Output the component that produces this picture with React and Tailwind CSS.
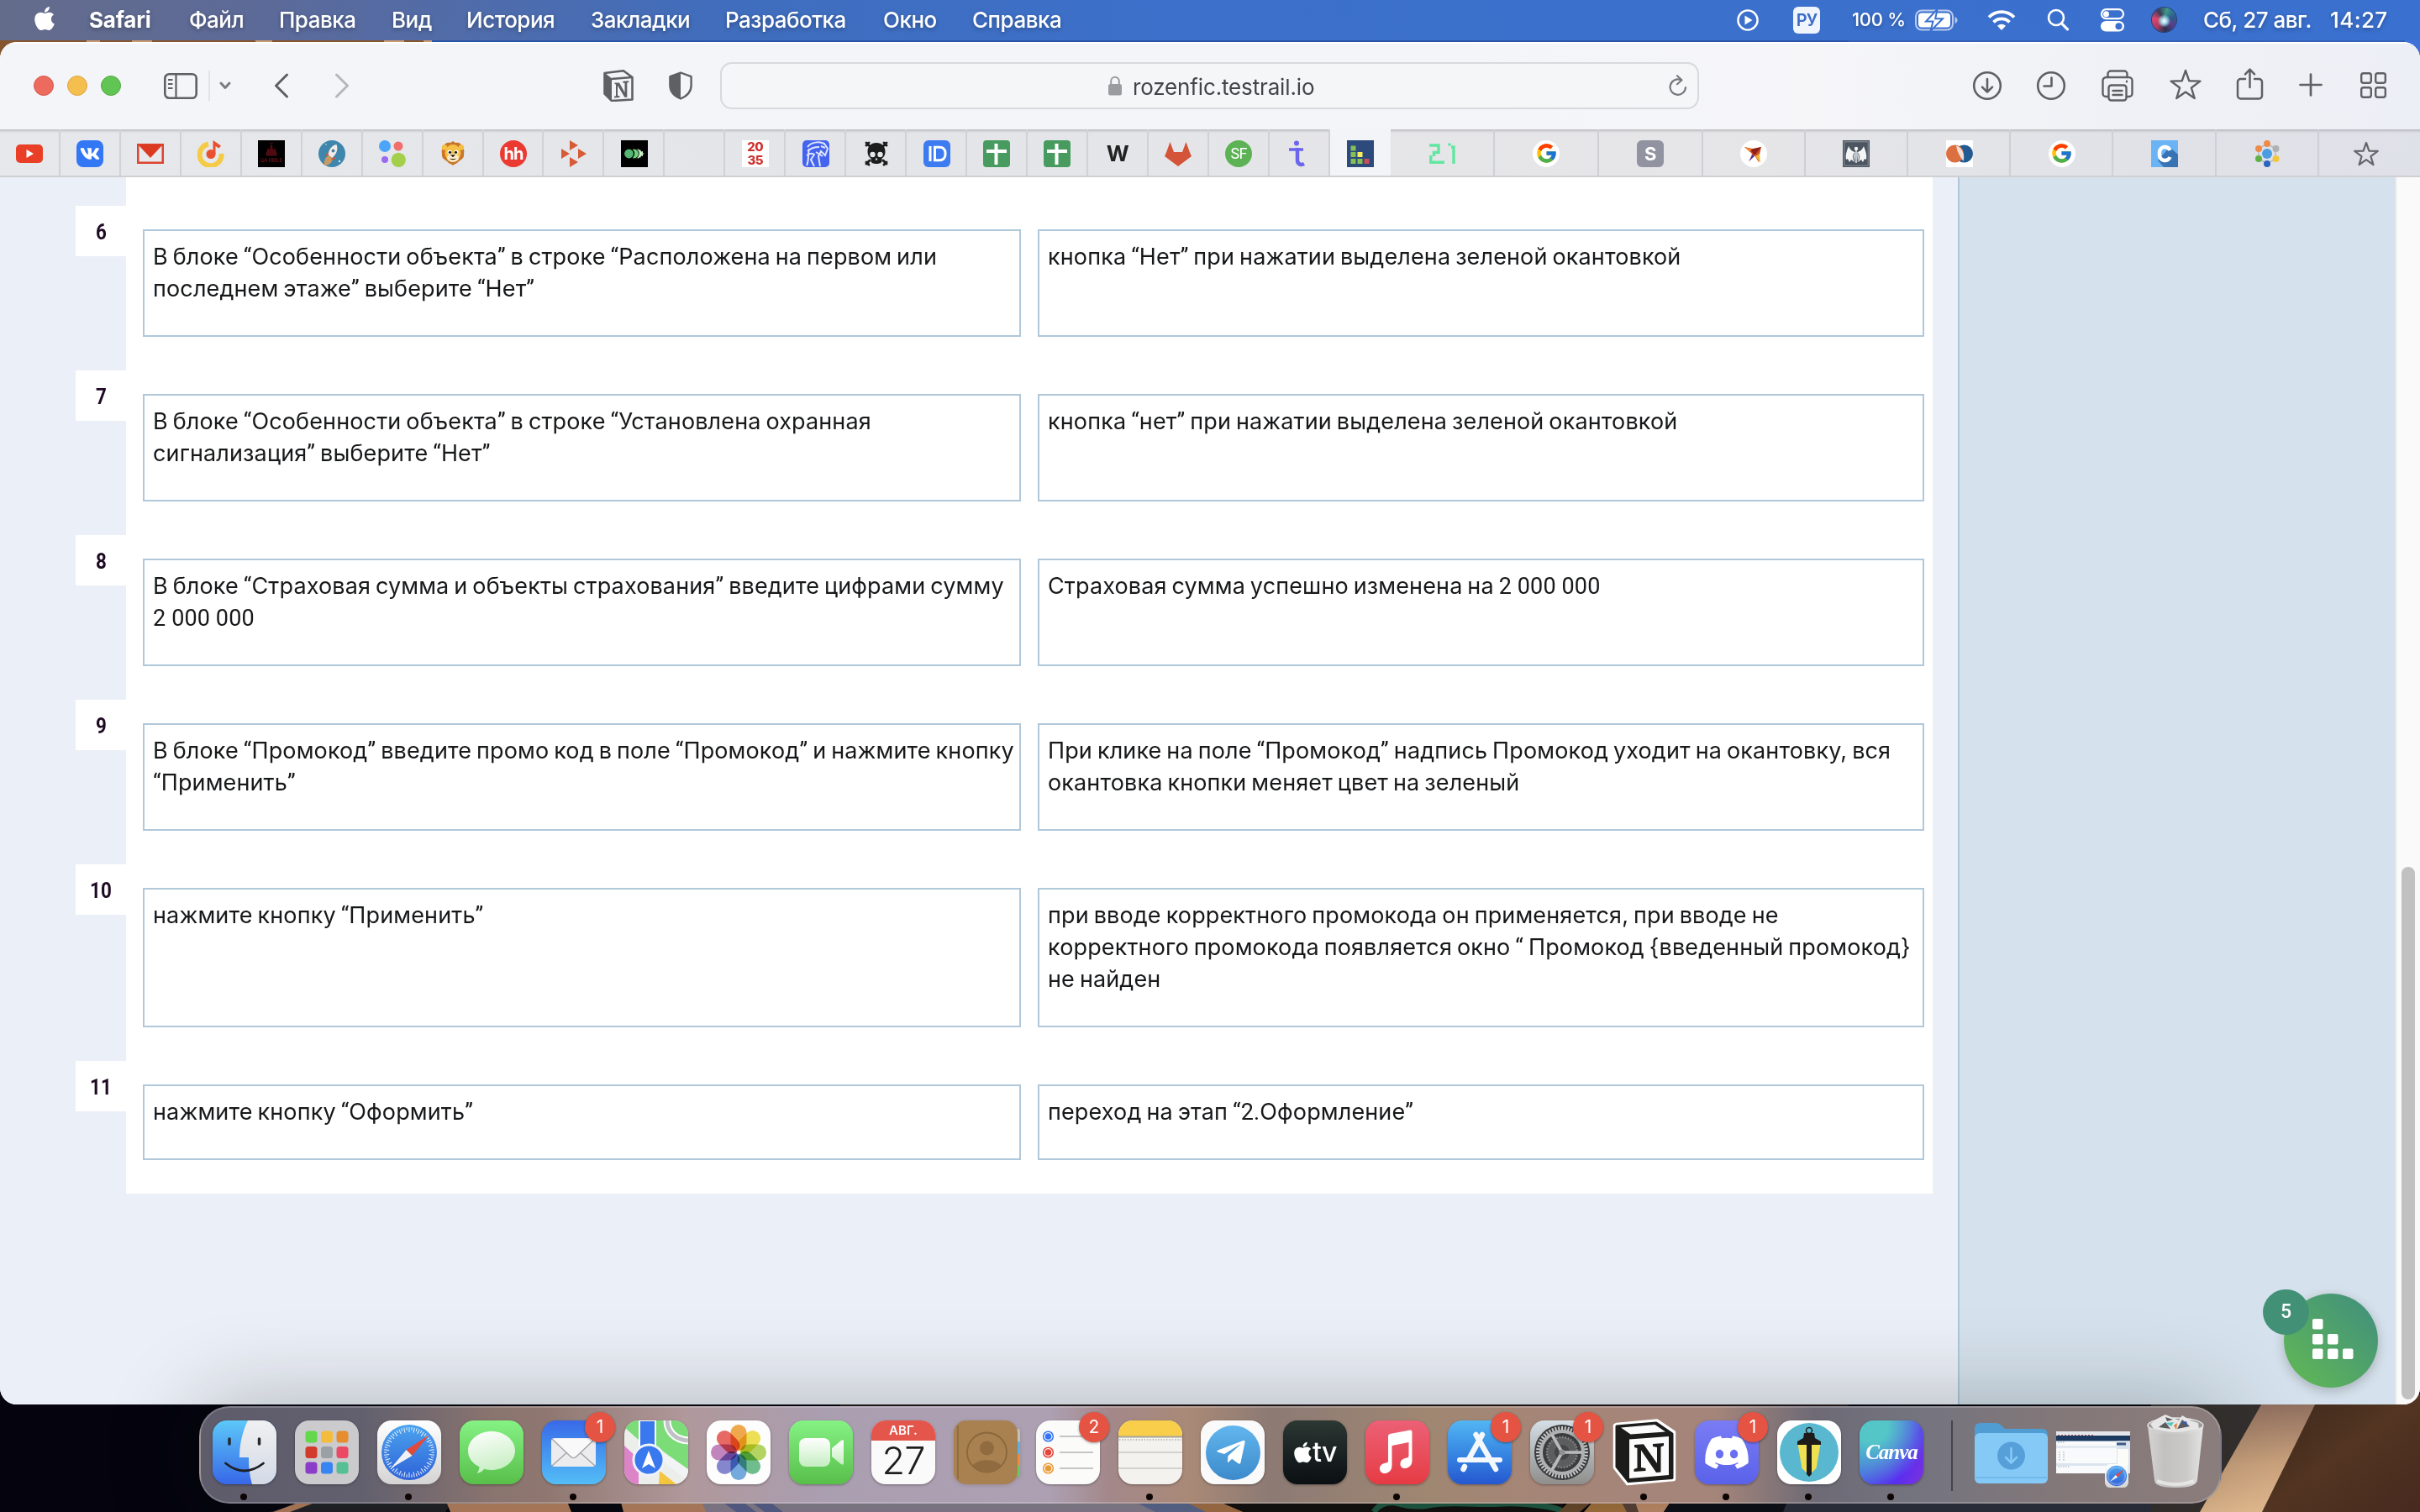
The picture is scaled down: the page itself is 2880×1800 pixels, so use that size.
import React from "react";
import { FaApple, FaVk, FaTelegramPlane, FaDiscord } from "react-icons/fa";
import { FcGoogle } from "react-icons/fc";

/* ---------- wallpaper ---------- */

function Wallpaper() {
  return (
    <svg className="absolute inset-0" width="2880" height="1800" viewBox="0 0 2880 1800">
      <defs>
        <linearGradient id="beam" x1="0" y1="0" x2="0" y2="1">
          <stop offset="0" stopColor="#86675a" />
          <stop offset="0.6" stopColor="#cda47f" />
          <stop offset="1" stopColor="#e4bb90" />
        </linearGradient>
        <linearGradient id="wood" x1="0" y1="0" x2="1" y2="1">
          <stop offset="0" stopColor="#3a271b" />
          <stop offset="0.5" stopColor="#533522" />
          <stop offset="1" stopColor="#47291f" />
        </linearGradient>
      </defs>
      <rect width="2880" height="1800" fill="#04030e" />
      <rect y="40" width="514" height="60" fill="#85552f" />
      <path d="M103 46h16v4h-16zM157 46h24v4h-24zM304 46h20v4h-20zM457 46h24v4h-24zM504 46h10v4h-10z" fill="#c79a72" />
      <rect x="514" y="40" width="1700" height="60" fill="#2b55a8" />
      <rect x="2200" y="40" width="680" height="60" fill="#3560b8" />
      <rect x="2862" y="40" width="18" height="60" fill="#3f72d8" />
      <path d="M320 1800L385 1785H540L530 1800z" fill="#222127" />
      <path d="M325 1800L365 1785H385L345 1800z" fill="#b97f60" />
      <path d="M530 1785H674L682 1800H536z" fill="#bd8463" />
      <path d="M674 1785H738L744 1800H680z" fill="#04040e" />
      <path d="M738 1785H834L842 1800H742z" fill="#bd8463" />
      <path d="M834 1785H1360L1380 1800H840z" fill="#8b8092" />
      <path d="M856 1785h24l20 15h-24zM890 1785h22l20 15h-22z" fill="#5a6190" />
      <path d="M1345 1785H1405L1440 1800H1375z" fill="#5d6992" />
      <path d="M1405 1785H1445L1480 1800H1435z" fill="#a9714a" />
      <path d="M1445 1785H1860V1800H1480z" fill="#120f10" />
      <path d="M1635 1800Q1645 1785 1665 1790T1700 1792T1745 1790T1790 1790T1830 1792T1860 1800" fill="none" stroke="#1f5a45" strokeWidth="7" />
      <path d="M1870 1785H1898L1880 1800H1855z" fill="#6b4a2e" />
      <path d="M1898 1785H1928L1940 1800H1885z" fill="#a8743e" />
      <path d="M1928 1785H1945L1952 1800H1936z" fill="#5b423a" />
      <path d="M1945 1785H1990L1980 1800H1950z" fill="#c68f6c" />
      <path d="M1990 1785H2128L2122 1800H1980z" fill="#0c0e18" />
      <path d="M2128 1785H2640V1800H2122z" fill="#2c2f3f" />
      <path d="M2560 1660H2800V1800H2560z" fill="#35302f" />
      <path d="M2755 1660H2880V1800H2692z" fill="url(#wood)" />
      <path d="M2698 1660H2761L2692 1800H2618z" fill="url(#beam)" />
      <rect x="1000" y="1668" width="1200" height="8" fill="#20151a" />
    </svg>
  );
}

/* ---------- menu bar ---------- */

function MenuBar() {
  return (
    <div className="relative flex h-[48px] shrink-0 items-center bg-[linear-gradient(90deg,#646c8b_0%,#5c6a99_11%,#4f6cab_20%,#406dbd_30%,#3c70ca_48%,#3a70cf_100%)] pb-[1px] text-[26px] font-medium tracking-[-0.5px] whitespace-nowrap text-white [text-shadow:0_2px_5px_rgba(0,0,0,0.3)]">
      <FaApple className="-mt-[4px] ml-[38px] h-[32px] w-[30px]" />
      <div className="ml-[38px] flex">
        <span className="w-[119px] font-bold tracking-[-0.2px]">Safari</span>
        <span className="w-[107px]">Файл</span>
        <span className="w-[134px]">Правка</span>
        <span className="w-[89px]">Вид</span>
        <span className="w-[148px]">История</span>
        <span className="w-[160px]">Закладки</span>
        <span className="w-[188px]">Разработка</span>
        <span className="w-[106px]">Окно</span>
        <span className="w-[108px]">Справка</span>
      </div>
      <svg className="ml-[802px]" width="26" height="26" viewBox="0 0 26 26">
        <circle cx="13" cy="13" r="11.6" fill="none" stroke="#fff" strokeWidth="2.4" />
        <path d="M9.5 7.5v11l9-5.5z" fill="#fff" />
      </svg>
      <div className="ml-[41px] flex h-[32px] w-[32px] items-center justify-center rounded-[6px] bg-[#f0f4fc] text-[20px] font-semibold tracking-[-1px] text-[#3a6cc8] [text-shadow:none]">РУ</div>
      <span className="ml-[38px] w-[75px] text-[22px] tracking-[-0.3px]">100 %</span>
      <svg width="51" height="26" viewBox="0 0 51 26">
        <rect x="1" y="1.5" width="44" height="23" rx="7" fill="none" stroke="#b9caee" strokeWidth="2" />
        <rect x="4" y="4.5" width="38" height="17" rx="4" fill="#fff" />
        <path d="M47.5 9v8c4-1.500 4-6.500 0-8z" fill="#b9caee" />
        <path d="M26.500 0L13 14.500h8.500L18.500 26L33 11.300h-8.800z" fill="#fff" stroke="#3a70cf" strokeWidth="2" />
      </svg>
      <svg className="ml-[35px]" width="34" height="26" viewBox="0 0 34 26" fill="none" stroke="#fff" strokeWidth="3.800">
        <path d="M2 9.500a21 21 0 0 1 30 0" />
        <path d="M7.500 15.300a13.500 13.500 0 0 1 19 0" />
        <path d="M17 25l-5-5.200a7 7 0 0 1 10 0z" fill="#fff" stroke="none" />
      </svg>
      <svg className="ml-[37px]" width="27" height="27" viewBox="0 0 27 27" fill="none" stroke="#fff" strokeWidth="2.600" strokeLinecap="round">
        <circle cx="11" cy="11" r="9" />
        <path d="M17.500 17.800l7 7" strokeWidth="3.200" />
      </svg>
      <svg className="ml-[36px]" width="30" height="28" viewBox="0 0 30 28">
        <rect x="2" y="1.200" width="26" height="11" rx="5.500" fill="none" stroke="#fff" strokeWidth="2.200" />
        <circle cx="7.500" cy="6.700" r="3.500" fill="#fff" />
        <rect x="1" y="15" width="28" height="12.500" rx="6.200" fill="#fff" />
        <circle cx="22.500" cy="21.200" r="4" fill="#3a70cf" />
      </svg>
      <div className="ml-[32px] h-[29px] w-[29px] rounded-full bg-[radial-gradient(circle_at_50%_55%,#ffffff_0%,#9fd6e8_16%,transparent_36%),conic-gradient(from_20deg,#3a8f8a,#2c5e8c,#5a3f8a,#27324f,#b23a63,#d8476c,#3a3a5a,#3fa08a)] ring-1 ring-[#27406f]" />
      <span className="ml-[32px] w-[151px]">Сб, 27 авг.</span>
      <span className="tracking-[0.4px]">14:27</span>
    </div>
  );
}

/* ---------- browser toolbar ---------- */

function NotionGlyph({ className }) {
  return (
    <svg className={className} viewBox="0 0 36 38">
      <path d="M1.500 4L24 1.200 34.500 9v26.500L10 37 1.500 28.500z" fill="#f3f4f7" stroke="#5f6064" strokeWidth="2.600" strokeLinejoin="round" />
      <path d="M1.500 4L9.500 10.500V36.500L1.500 28.500z" fill="#5f6064" stroke="#5f6064" strokeLinejoin="round" />
      <path d="M9.500 11L34 9" stroke="#5f6064" strokeWidth="2.400" />
      <path d="M13.500 15.500h5.500l6.500 11.500v-11l-2.200-.6v-1.600l7-.5v1.700l-2 .6v17.200h-3l-8.300-14v12l2.500.7v1.500l-6.500.4v-1.600l2-.6V17.400l-1.500-.4z" fill="#5f6064" />
    </svg>
  );
}

function Toolbar() {
  return (
    <div className="flex h-[104px] shrink-0 items-center bg-[linear-gradient(90deg,#f4f5f8_0%,#f4f5f9_60%,#f6f6f9_75%,#eff1f6_88%,#eceff5_100%)] text-[#5f6064] shadow-[inset_0_2px_0_rgba(255,255,255,0.9)]">
      <div className="ml-[40px] flex gap-[16px]">
        <div className="h-[24px] w-[24px] rounded-full border border-[#d9564b] bg-[#ec6a5e]" />
        <div className="h-[24px] w-[24px] rounded-full border border-[#dea63c] bg-[#f4bf4f]" />
        <div className="h-[24px] w-[24px] rounded-full border border-[#52a83e] bg-[#61c554]" />
      </div>
      <svg className="ml-[51px]" width="40" height="31" viewBox="0 0 40 31" fill="none" stroke="currentColor" strokeWidth="2.600">
        <rect x="1.300" y="1.300" width="37.400" height="28.400" rx="5" />
        <path d="M14.500 1.500v28M5 8h5.500M5 13h5.500M5 18h5.500" strokeWidth="2.200" />
      </svg>
      <div className="ml-[13px] h-[36px] w-[2px] bg-[#e2e3e7]" />
      <svg className="ml-[11px]" width="14" height="10" viewBox="0 0 14 10" fill="none" stroke="#7a7b80" strokeWidth="3" strokeLinecap="round" strokeLinejoin="round">
        <path d="M2 2l5 5.500L12 2" />
      </svg>
      <svg className="ml-[51px]" width="18" height="30" viewBox="0 0 18 30" fill="none" stroke="currentColor" strokeWidth="3" strokeLinecap="round" strokeLinejoin="round">
        <path d="M15.500 2L2.500 15l13 13" />
      </svg>
      <svg className="ml-[54px]" width="18" height="30" viewBox="0 0 18 30" fill="none" stroke="#b6b7bb" strokeWidth="3" strokeLinecap="round" strokeLinejoin="round">
        <path d="M2.500 2l13 13-13 13" />
      </svg>
      <NotionGlyph className="ml-[302px] h-[38px] w-[36px]" />
      <svg className="ml-[42px]" width="28" height="34" viewBox="0 0 28 34">
        <path d="M14 1.500L26.600 6.200v10.500c0 7.500-5 12.500-12.600 15.800C6.400 29.200 1.400 24.200 1.400 16.700V6.200z" fill="none" stroke="currentColor" strokeWidth="2.400" strokeLinejoin="round" />
        <path d="M14 1.500v31C6.400 29.200 1.400 24.200 1.400 16.700V6.200z" fill="currentColor" />
      </svg>
      <div className="ml-[33px] flex h-[56px] w-[1165px] items-center rounded-[14px] border-2 border-[#d8d9dc] bg-[#f5f6f8]">
        <svg className="ml-[460px]" width="16" height="24" viewBox="0 0 16 24">
          <rect x="0" y="10" width="16" height="13.500" rx="2.500" fill="#9b9c9f" />
          <path d="M3.200 11V6.500a4.800 4.800 0 0 1 9.600 0V11" fill="none" stroke="#9b9c9f" strokeWidth="2" />
        </svg>
        <span className="mt-[2px] ml-[13px] text-[26px] tracking-[-0.15px] text-[#434447]">rozenfic.testrail.io</span>
        <svg className="mr-[12px] ml-auto" width="22" height="26" viewBox="0 0 22 26" fill="none" stroke="#77787c" strokeWidth="2.200" strokeLinecap="round" strokeLinejoin="round">
          <path d="M14.500 6.200A9.200 9.200 0 1 0 20 15" />
          <path d="M10 1.200l5.500 5-5.500 5" />
        </svg>
      </div>
      <div className="flex items-center [&>svg]:fill-none [&>svg]:stroke-current [&>svg]:[stroke-linecap:round] [&>svg]:[stroke-linejoin:round]">
        <svg className="ml-[325px]" width="36" height="36" viewBox="0 0 36 36" strokeWidth="2.600">
          <circle cx="18" cy="18" r="15.800" />
          <path d="M18 10v15.500M12 19.700l6 6 6-6" />
        </svg>
        <svg className="ml-[40px]" width="36" height="36" viewBox="0 0 36 36" strokeWidth="2.600">
          <circle cx="18" cy="18" r="15.800" />
          <path d="M18.500 8.500v10h-9" />
        </svg>
        <svg className="ml-[42px]" width="38" height="38" viewBox="0 0 38 38" strokeWidth="2.400">
          <path d="M8 32H5a3.500 3.500 0 0 1-3.500-3.500V13A4 4 0 0 1 5.500 9h27a4 4 0 0 1 4 4v15.500A3.500 3.500 0 0 1 33 32h-3" />
          <path d="M7.500 9V5A3.500 3.500 0 0 1 11 1.500h16A3.500 3.500 0 0 1 30.500 5v4" />
          <rect x="8.500" y="18.500" width="21" height="18" rx="3" />
          <path d="M13.500 25h11M13.500 30h11M30 13.800v.4" />
        </svg>
        <svg className="-mt-[3px] ml-[43px]" width="38" height="37" viewBox="0 0 38 37" strokeWidth="2.400">
          <path d="M19 2l4.300 12.300 13.100.3-10.500 7.900 3.800 12.600L19 27.600 8.300 35.100l3.800-12.600L1.600 14.600l13.100-.3z" />
        </svg>
        <svg className="-mt-[4px] ml-[41px]" width="33" height="38" viewBox="0 0 33 38" strokeWidth="2.500">
          <path d="M11 13H5.500A3.500 3.500 0 0 0 2 16.500V33a3.500 3.500 0 0 0 3.500 3.500h22A3.500 3.500 0 0 0 31 33V16.500A3.500 3.500 0 0 0 27.500 13H22M16.500 23V2M11 7.300L16.500 1.700 22 7.300" />
        </svg>
        <svg className="-mt-[2px] ml-[42px]" width="28" height="28" viewBox="0 0 28 28" strokeWidth="2.700">
          <path d="M14 1.500v25M1.500 14h25" />
        </svg>
        <svg className="-mt-[2px] ml-[45px]" width="31" height="31" viewBox="0 0 31 31" strokeWidth="2.400">
          <rect x="1.200" y="1.200" width="11.600" height="11.600" rx="2.500" />
          <rect x="18.200" y="1.200" width="11.600" height="11.600" rx="2.500" />
          <rect x="1.200" y="18.200" width="11.600" height="11.600" rx="2.500" />
          <rect x="18.200" y="18.200" width="11.600" height="11.600" rx="2.500" />
        </svg>
      </div>
    </div>
  );
}

/* ---------- pinned tabs ---------- */

const tile = "flex h-[32px] w-[32px] items-center justify-center overflow-hidden leading-none";
const Svg = ({ children }) => (
  <svg width="32" height="32" viewBox="0 0 32 32">{children}</svg>
);
const Sheets = () => (
  <Svg>
    <rect width="32" height="32" rx="4" fill="#479b5f" />
    <path d="M13.500 4h4v7H28v4H17.500v14h-4V15H4v-4h9.500z" fill="#fff" />
  </Svg>
);
const Google = () => (
  <div className={`${tile} rounded-full bg-white`}>
    <FcGoogle className="h-[27px] w-[27px]" />
  </div>
);

const pinned = [
  <Svg><rect y="5" width="32" height="22" rx="5" fill="#ea3f27" /><path d="M12.500 11v10l8.500-5z" fill="#fff" /></Svg>,
  <div className={`${tile} rounded-[8px] bg-[#3477f5] text-white`}><FaVk className="h-[24px] w-[24px]" /></div>,
  <Svg><rect y="4" width="32" height="24" fill="#dc4330" /><path d="M2.500 6.500V25.500h27V6.500L16 21z" fill="#e8e9ec" /><path d="M2 5L16 20 30 5z" fill="#dc3a20" /></Svg>,
  <Svg><path d="M13 4.500A13 13 0 1 0 28.500 16" fill="none" stroke="#f5cb45" strokeWidth="6" /><circle cx="16" cy="16.500" r="5.500" fill="#e8502f" /><path d="M18.500 0l9.500 6.500-2.500 3-4-2.500V17h-3z" fill="#e8502f" /></Svg>,
  <Svg><rect width="32" height="32" fill="#000" /><path d="M10 16l2-6 2 3 2-8 2 8 2-3 2 6v2H10zM14 3.500h4" fill="#4d0b12" stroke="#6e1019" strokeWidth=".7" /><text x="2.500" y="26" fontSize="6.800" textLength="27" fontFamily="Inter" fill="#7c141c">QA BIBLE</text></Svg>,
  <Svg><circle cx="16" cy="16" r="16" fill="#3f86ad" /><path d="M7 30c-1-7 2-11 7-13l3 6c-2 4-4 7-10 7z" fill="#c99a62" /><path d="M21.500 5c2 5 .5 11-5 16l-5-4c1-6 4-11 10-12z" fill="#f1ece8" /><path d="M11.500 13l-3.500 6 3.500-1zM18 19.500L14.500 24l6.500-2z" fill="#d6533a" /><circle cx="17.500" cy="12.500" r="2" fill="#4b7fa8" /><circle cx="25" cy="25" r="1.200" fill="#dce9f0" /><circle cx="9" cy="5" r=".8" fill="#dce9f0" /></Svg>,
  <Svg><circle cx="7" cy="7" r="7" fill="#4ca5f9" /><circle cx="23" cy="7" r="5.500" fill="#ee6f6c" /><circle cx="7" cy="23" r="4" fill="#9a6bf0" /><circle cx="23.300" cy="23.300" r="8.600" fill="#a3cf4b" /></Svg>,
  <Svg><path d="M16 1l3 2c4-1 7 1 8 4 2 3 3 6 2 9 1 5-3 7-6 9-2 3-5 3-7 5-2-2-5-2-7-5-3-2-7-4-6-9-1-3 0-6 2-9 1-3 4-5 8-4z" fill="#c9762a" /><circle cx="6" cy="8.500" r="3.200" fill="#f6c044" /><circle cx="26" cy="8.500" r="3.200" fill="#f6c044" /><ellipse cx="16" cy="15" rx="9.500" ry="10" fill="#f6c044" /><ellipse cx="16" cy="21" rx="7" ry="5" fill="#fbecc8" /><circle cx="12" cy="14" r="2.500" fill="#fff" /><circle cx="20" cy="14" r="2.500" fill="#fff" /><circle cx="12.500" cy="14.300" r="1.600" fill="#1c1a18" /><circle cx="19.500" cy="14.300" r="1.600" fill="#1c1a18" /><path d="M13.500 17.500h5L16 20zM12.500 22q3.500 2 7 0" fill="#1c1a18" stroke="#4a2c10" strokeWidth=".6" /></Svg>,
  <div className={`${tile} rounded-full bg-[#eb3a31] text-[20px] font-bold tracking-[-1px] text-white`}>hh</div>,
  <Svg><path d="M11 0l10 6-10 6zM1 10l10 6-10 6zM21 10l10 6-10 6zM11 20l10 6-10 6z" fill="#d75b36" /></Svg>,
  <Svg><rect width="32" height="32" fill="#000" /><path d="M17 10.800h2.500a5.300 5.300 0 0 1 0 10.400H17z" fill="#c9f2c5" /><path d="M20 10l2 2 1-1 1 2.500 2-.5v2.200l2 .8-2 .8v2.200l-2-.5-1 2.500-1-1-2 2z" fill="#c9f2c5" /><circle cx="15.500" cy="16" r="6.200" fill="#000" /><circle cx="15.500" cy="16" r="5.400" fill="#6fd07f" /><circle cx="10" cy="16" r="6.200" fill="#000" /><circle cx="9.500" cy="16" r="5.400" fill="#55b673" /></Svg>,
  null,
  <div className={`${tile} flex-col bg-white text-[15px] font-extrabold tracking-[-0.5px] text-[#d0312d]`}><span>20</span><span className="mt-[1px]">35</span></div>,
  <Svg><rect width="32" height="32" rx="5" fill="#4564ee" /><path d="M6 8c4-6 14-7 20-4l4 6-3 8-5-5-3 6 2 12M6 13c5-5 10-5 14-5M5 18c3-2 7-3 9-1l-4 6 4 8M8 10c-2 8 0 14-3 20M16 14l8 5M22 7l5 2" fill="none" stroke="#dfe6ff" strokeWidth="2" /></Svg>,
  <Svg><path d="M4 3l4 4M28 3l-4 4M4 28l4-4M28 28l-4-4M7 3L4 6M25 3l3 3M7 29l-3-3M25 29l3-3" stroke="#1c1c1c" strokeWidth="3" strokeLinecap="round" /><path d="M16 3c6.500 0 10.500 4.500 10.500 10.500 0 4-1.500 6.500-4 8V25c0 2-3 3-6.500 3S9.500 27 9.500 25v-3.500c-2.500-1.500-4-4-4-8C5.500 7.500 9.500 3 16 3z" fill="#1c1c1c" /><circle cx="11.500" cy="17" r="3.200" fill="#e5e6e9" /><circle cx="20.500" cy="17" r="3.200" fill="#e5e6e9" /><path d="M16 20.500l1.500 3h-3z" fill="#e5e6e9" /></Svg>,
  <Svg><rect width="32" height="32" rx="6" fill="#3d7cf0" /><path d="M8 7v18M13.500 8.200h6a6.500 6.500 0 0 1 6.500 6.500v2.600a6.500 6.500 0 0 1-6.500 6.500h-6z" fill="none" stroke="#fff" strokeWidth="3" /></Svg>,
  <Sheets />,
  <Sheets />,
  <span className="text-[26px] leading-none font-bold text-[#222]">W</span>,
  <Svg><path d="M6.500 2l4.500 12h10L25.500 2l4.500 12.500 2 4.500L16 31 0 19l2-4.500z" fill="#d35438" /></Svg>,
  <div className={`${tile} rounded-full bg-[#5cb255] font-[Roboto] text-[18px] tracking-[-0.5px] text-white`}>SF</div>,
  <Svg><circle cx="13" cy="3.500" r="3" fill="#6a64ee" /><path d="M4 11h17" stroke="#6a64ee" strokeWidth="3.600" /><path d="M14 9v14.500c0 5 4 6.500 8 4.500" fill="none" stroke="#6a64ee" strokeWidth="4.500" /></Svg>,
  <Svg><rect width="32" height="32" fill="#2c4a7c" /><path d="M4.500 6.500h6v6h-6zM4.500 14h6v6h-6zM4.500 22h6v6h-6zM12.500 22h6v6h-6z" fill="#86bf55" /><path d="M12.500 14h6v6h-6z" fill="#f7ef5c" /><path d="M20.500 22h6v6h-6z" fill="#c94f5c" /></Svg>,
];

const wide = [
  <Svg><path d="M1 6h11v5M12 10.500v4H6.500v4.500M2.800 18v8.200H19M25 3.500v3M27 8h3v20" fill="none" stroke="#62e6a0" strokeWidth="3.400" /></Svg>,
  <Google />,
  <div className={`${tile} rounded-[6px] bg-[#9193a0] text-[22px] font-bold text-white`}>S</div>,
  <Svg><circle cx="16" cy="16" r="16" fill="#fff" /><path d="M5 8l10 2 10-2-2 9-1 9-5-8-6 7 3-9z" fill="#c9501f" /><path d="M12 11l13-3-8 10z" fill="#8e1f1a" /><path d="M10 25l5-8 2 2z" fill="#5130a8" /><path d="M18 19l5-3 1 11z" fill="#f0b432" /><path d="M5 8l9 2.500-3 3z" fill="#ef8a35" /></Svg>,
  <Svg><rect width="32" height="32" fill="#4c5560" /><rect x="1.800" y="1.800" width="28.400" height="28.400" fill="none" stroke="#8b939c" /><path d="M7 7c2 5 6 7 8 7l-1 12-4-3-2 3-2-4-2 1c-1-6 1-11 3-16zM25 7c-2 5-6 7-8 7l1 12 4-3 2 3 2-4 2 1c1-6-1-11-3-16z" fill="#f4f5f6" /><circle cx="16" cy="10" r="2.200" fill="#f4f5f6" /><ellipse cx="16" cy="20" rx="3.500" ry="5.500" fill="none" stroke="#6c747e" strokeWidth="1.200" /><path d="M16 12v15" stroke="#dfe2e5" strokeWidth="1.600" /></Svg>,
  <Svg><rect width="32" height="32" fill="#fff" /><circle cx="21.500" cy="16" r="10.500" fill="#215a93" /><circle cx="10.500" cy="16" r="10.500" fill="#dd7041" /><path d="M12 6.500q5 1 7.500 6.500 3 6 1 12-2-2.500-4.500-7Q13 13 12 6.500z" fill="#f5f1ee" opacity=".85" /></Svg>,
  <Google />,
  <Svg><rect width="32" height="32" fill="#6ab4f6" /><path d="M22 8l10 9v15H15l-7-8z" fill="#3873b4" /><path d="M22.500 12a6.500 6.500 0 0 0-12.500 2v4a6.500 6.500 0 0 0 12.500 2" fill="none" stroke="#fff" strokeWidth="4.500" /></Svg>,
  <Svg><path d="M16 4l10 6v12l-10 6-10-6V10z" fill="none" stroke="#b8babf" strokeWidth="1.500" /><circle cx="16" cy="16" r="6" fill="#4a9de0" /><circle cx="16" cy="4" r="4" fill="#ef8b49" /><circle cx="6" cy="10" r="4" fill="#ef8b49" /><circle cx="26.500" cy="10" r="4" fill="#b1b1b1" /><circle cx="6" cy="22" r="4" fill="#61b244" /><circle cx="26.500" cy="22" r="4" fill="#f5c63d" /><circle cx="16" cy="28" r="4" fill="#2c63bf" /></Svg>,
  <svg className="-ml-[8px]" width="30" height="30" viewBox="0 0 38 37" fill="none" stroke="#65666a" strokeWidth="2.800" strokeLinejoin="round"><path d="M19 2l4.300 12.300 13.100.3-10.500 7.900 3.800 12.600L19 27.600 8.300 35.100l3.800-12.600L1.600 14.600l13.100-.3z" /></svg>,
];

function TabBar() {
  return (
    <div className="flex h-[57px] shrink-0 border-b-2 border-[#cfd0d3] bg-[linear-gradient(90deg,#e6e8ec_0%,#e4e5e9_35%,#e6e6e8_70%,#e1e2e8_88%,#dfe1e8_100%)]">
      {pinned.map((icon, i) => {
        const active = i === pinned.length - 1;
        return (
          <div
            key={i}
            className={
              active
                ? "flex w-[72px] shrink-0 items-center justify-center bg-[#f3f4f7] pt-[2px]"
                : "flex w-[71.950px] shrink-0 items-center justify-center border-r-2 border-[#d1d2d6] pt-[2px] pl-[1px] shadow-[inset_0_4px_3px_-2px_rgba(0,0,0,0.18)]"
            }
          >
            {icon}
          </div>
        );
      })}
      {wide.map((icon, i) => (
        <div
          key={i}
          className={
            i < 3
              ? "flex w-[124px] shrink-0 items-center justify-center border-r-2 border-[#cfd0d5] pt-[2px] pl-[1px] shadow-[inset_0_4px_3px_-2px_rgba(0,0,0,0.18)]"
              : "flex flex-1 items-center justify-center border-r-2 border-[#cfd0d5] pt-[2px] pl-[1px] shadow-[inset_0_4px_3px_-2px_rgba(0,0,0,0.18)] last:border-r-0"
          }
        >
          {icon}
        </div>
      ))}
    </div>
  );
}

/* ---------- test case steps ---------- */

const steps = [
  { n: 6, h: "h-[128px]", step: ["В блоке “Особенности объекта” в строке “Расположена на первом или", "последнем этаже” выберите “Нет”"], expected: ["кнопка “Нет” при нажатии выделена зеленой окантовкой"] },
  { n: 7, h: "h-[128px]", step: ["В блоке “Особенности объекта” в строке “Установлена охранная", "сигнализация” выберите “Нет”"], expected: ["кнопка “нет” при нажатии выделена зеленой окантовкой"] },
  { n: 8, h: "h-[128px]", step: ["В блоке “Страховая сумма и объекты страхования” введите цифрами сумму", "2 000 000"], expected: ["Страховая сумма успешно изменена на 2 000 000"] },
  { n: 9, h: "h-[128px]", step: ["В блоке “Промокод” введите промо код в поле “Промокод” и нажмите кнопку", "“Применить”"], expected: ["При клике на поле “Промокод” надпись Промокод уходит на окантовку, вся", "окантовка кнопки меняет цвет на зеленый"] },
  { n: 10, h: "h-[166px]", step: ["нажмите кнопку “Применить”"], expected: ["при вводе корректного промокода он применяется, при вводе не", "корректного промокода появляется окно “ Промокод {введенный промокод}", "не найден"] },
  { n: 11, h: "h-[90px]", step: ["нажмите кнопку “Оформить”"], expected: ["переход на этап “2.Оформление”"] },
];

function Lines({ lines }) {
  return lines.map((line) => (
    <div key={line}>
      {line.split(/([“”]|[\d][\d .]*)/).map((part, i) =>
        i % 2 ? <span key={i} className="font-[Roboto] [word-spacing:0px]">{part}</span> : part
      )}
    </div>
  ));
}

function StepRow({ row }) {
  const box = "shrink-0 border-2 border-[#b1c8db] px-[10px] pt-[12px] text-[27px] leading-[38px] tracking-[0.130px] whitespace-nowrap text-[#17181a] [word-spacing:-1.800px]";
  return (
    <div className="flex">
      <div className="w-[150px] shrink-0 pl-[90px]">
        <div className="flex h-[60px] items-center justify-center bg-white pt-[2px] font-[Roboto] text-[26px] font-bold text-[#1f0a24]">
          <span className="inline-block scale-x-[0.86]">{row.n}</span>
        </div>
      </div>
      <div className="flex w-[2150px] gap-[20px] bg-white pt-[28px] pb-[40px] pl-[20px]">
        <div className={`${box} ${row.h} w-[1045px]`}><Lines lines={row.step} /></div>
        <div className={`${box} ${row.h} w-[1055px]`}><Lines lines={row.expected} /></div>
      </div>
    </div>
  );
}

function Content() {
  return (
    <div className="relative flex min-h-0 flex-1">
      <div className="w-[2330px] shrink-0 bg-[#ebeff7]">
        <div className="ml-[150px] h-[34px] w-[2150px] bg-white" />
        {steps.map((row) => (
          <StepRow key={row.n} row={row} />
        ))}
      </div>
      <div className="w-[520px] shrink-0 border-l-2 border-[#aec7dd] bg-[#d5e1ec]" />
      <div className="flex-1 border-l-2 border-[#e6e6e8] bg-[#fafafa]">
        <div className="mt-[821px] ml-[6px] h-[634px] w-[16px] rounded-full bg-[#c1c1c1]" />
      </div>
      <div className="absolute top-[1329px] left-[2718px] h-[112px] w-[112px] rounded-full bg-[linear-gradient(45deg,#5db35a_15%,#459478_85%)] shadow-[0_4px_14px_rgba(0,0,0,0.22)]">
        <svg className="absolute top-[30px] left-[34px]" width="49" height="49" viewBox="0 0 49 49" fill="#fff">
          <rect width="12.500" height="12.500" rx="2" />
          <rect y="18" width="12.500" height="12.500" rx="2" />
          <rect x="18" y="18" width="12.500" height="12.500" rx="2" />
          <rect y="35.500" width="12.500" height="12.500" rx="2" />
          <rect x="18" y="35.500" width="12.500" height="12.500" rx="2" />
          <rect x="36" y="35.500" width="12.500" height="12.500" rx="2" />
        </svg>
      </div>
      <div className="absolute top-[1324px] left-[2693px] flex h-[54px] w-[55px] items-center justify-center rounded-full bg-[#429177] font-[Roboto] text-[23px] font-medium text-white">5</div>
    </div>
  );
}

/* ---------- dock ---------- */

const icon = "flex h-[76px] w-[76px] items-center justify-center overflow-hidden rounded-[17px] shadow-[0_1px_3px_rgba(0,0,0,0.35)]";
const S76 = ({ children }) => (
  <svg width="76" height="76" viewBox="0 0 76 76">{children}</svg>
);

const ticks = Array.from({ length: 60 }, (_, i) => i * 6);
const Compass = ({ className }) => (
  <svg className={className} viewBox="0 0 76 76">
    <defs>
      <linearGradient id="compass" x1="0" y1="0" x2="0" y2="1"><stop offset="0" stopColor="#4aa3ee" /><stop offset="1" stopColor="#2f62d8" /></linearGradient>
      <linearGradient id="plate" x1="0" y1="0" x2="0" y2="1"><stop offset="0" stopColor="#ffffff" /><stop offset="1" stopColor="#d4d4d4" /></linearGradient>
    </defs>
    <rect width="76" height="76" rx="17" fill="url(#plate)" />
    <circle cx="38" cy="38" r="33" fill="url(#compass)" />
    {ticks.map((a, i) => (
      <path key={a} d={i % 2 ? "M38 8v3.500" : "M38 8v6"} stroke="#e8f2fd" strokeWidth="1" transform={`rotate(${a} 38 38)`} />
    ))}
    <path d="M62 17L41.500 42 34.500 35z" fill="#e14a3b" />
    <path d="M16 57L34.500 35 41.500 42z" fill="#f2f2f4" />
  </svg>
);

const petals = [
  ["#f09a2e", 0], ["#ecdc34", 45], ["#a8cf45", 90], ["#57b37a", 135],
  ["#5b9bd8", 180], ["#7272c8", 225], ["#b96fb4", 270], ["#e6504a", 315],
];
const padColors = ["#62d84a", "#f4bc3c", "#e68d30", "#d23a2c", "#9aa0a3", "#ea4a63", "#8b3cc8", "#3685f3", "#56bf93"];
const teeth = Array.from({ length: 48 }, (_, i) => i * 7.5);

const apps = [
  { id: "finder", dot: true, node: (
    <div className={icon}><S76>
      <defs><linearGradient id="fl" x1="0" y1="0" x2="0" y2="1"><stop offset="0" stopColor="#5cc8f8" /><stop offset="1" stopColor="#3767e8" /></linearGradient><linearGradient id="fr" x1="0" y1="0" x2="0" y2="1"><stop offset="0" stopColor="#f0f0f1" /><stop offset="1" stopColor="#d3dae6" /></linearGradient></defs>
      <rect width="76" height="76" fill="url(#fl)" />
      <path d="M42 0C35 14 32 30 32 44h11c0 12 1 22 4 32h29V0z" fill="url(#fr)" />
      <path d="M20 22v6M55.500 22v6" stroke="#26292e" strokeWidth="3.500" strokeLinecap="round" />
      <path d="M15.500 51q22 18 45 0" fill="none" stroke="#1d2025" strokeWidth="2.800" strokeLinecap="round" />
    </S76></div>) },
  { id: "launchpad", node: (
    <div className={`${icon} bg-[#cbcacd]`}><S76>
      {padColors.map((c, i) => <rect key={c} x={12.500 + (i % 3) * 18.500} y={12.500 + Math.floor(i / 3) * 18.500} width="14" height="14" rx="3.500" fill={c} />)}
    </S76></div>) },
  { id: "safari", dot: true, node: <Compass className="h-[76px] w-[76px] drop-shadow-sm" /> },
  { id: "messages", node: (
    <div className={`${icon} bg-linear-to-b from-[#85f284] to-[#58bf49]`}><S76>
      <defs><linearGradient id="bub" x1="0" y1="0" x2="0.3" y2="1"><stop offset="0" stopColor="#fff" /><stop offset="1" stopColor="#c9efc4" /></linearGradient></defs>
      <path d="M38 13c15.500 0 28 10.300 28 23S53.500 59 38 59c-3 0-6-.4-8.700-1.200C27 60.500 24 62.500 20.500 62.700c2-2 3-5 3-7.500C15 51.200 10 44.200 10 36 10 23.300 22.500 13 38 13z" fill="url(#bub)" />
    </S76></div>) },
  { id: "mail", badge: 1, dot: true, node: (
    <div className={`${icon} bg-linear-to-b from-[#3a68e8] to-[#55bdf6]`}><S76>
      <rect x="11" y="21" width="53" height="34" rx="4" fill="#ececee" />
      <path d="M12 54l20-18M63 54L43 36" stroke="#a6a6aa" strokeWidth="1.500" />
      <path d="M12 22l22 21c2 2 5 2 7 0l22-21" fill="#f9f9fa" stroke="#a6a6aa" strokeWidth="1.500" />
    </S76></div>) },
  { id: "maps", node: (
    <div className={`${icon} bg-[#eceeec]`}><S76>
      <path d="M0 0h18v24L0 8zM37 0h39v60L37 30z" fill="#7bdc78" />
      <path d="M18 0h19v40H18z" fill="#3a78ee" stroke="#fff" strokeWidth="2" />
      <path d="M0 30l17 16v30H0z" fill="#dd84c8" />
      <path d="M42 60l20 16H41z" fill="#f4c53e" />
      <path d="M51 0c0 13 9 23 25 24" fill="none" stroke="#fff" strokeWidth="9" /><path d="M51 0c0 13 9 23 25 24" fill="none" stroke="#bfc2c5" strokeWidth="5" />
      <path d="M36 30l40 28v14L50 52z" fill="#f2f3f4" />
      <circle cx="29" cy="47" r="18" fill="#3a78ee" stroke="#eef3fa" strokeWidth="3" />
      <path d="M29 36l8 21-8-5-8 5z" fill="#fff" />
    </S76></div>) },
  { id: "photos", node: (
    <div className={`${icon} bg-[#fdfdfd]`}><S76>
      {petals.map(([c, a]) => <rect key={a} x="28.500" y="5" width="19" height="31" rx="9.500" fill={c} opacity=".85" className="mix-blend-multiply" transform={`rotate(${a} 38 38)`} />)}
    </S76></div>) },
  { id: "facetime", node: (
    <div className={`${icon} bg-linear-to-b from-[#85f284] to-[#58bf49]`}><S76>
      <defs><linearGradient id="cam" x1="0" y1="0" x2="0" y2="1"><stop offset="0" stopColor="#fff" /><stop offset="1" stopColor="#c4eec0" /></linearGradient></defs>
      <rect x="12" y="21" width="37" height="34" rx="8" fill="url(#cam)" />
      <path d="M51 33l11-9q3-2 3 1v26q0 3-3 1l-11-9z" fill="url(#cam)" />
    </S76></div>) },
  { id: "calendar", node: (
    <div className={`${icon} flex-col justify-start bg-[#fafafa]`}>
      <div className="flex h-[24px] w-full shrink-0 items-center justify-center bg-[#e4554b] text-[15px] font-semibold text-white">АВГ.</div>
      <div className="text-[45px] leading-[48px] font-light tracking-[-1px] text-[#1e1e1e]">27</div>
    </div>) },
  { id: "contacts", node: (
    <svg width="80" height="76" viewBox="0 0 80 76" className="max-w-none drop-shadow-sm">
      <rect x="68" y="10" width="11" height="17" rx="3" fill="#c5c1b8" /><rect x="68" y="25" width="11" height="17" rx="3" fill="#57b2e6" /><rect x="68" y="40" width="11" height="15" rx="3" fill="#ee8d37" /><rect x="68" y="53" width="11" height="14" rx="3" fill="#6cc763" />
      <rect width="76" height="76" rx="15" fill="#a98150" /><path d="M5 6v64" stroke="#8a673c" strokeWidth="1.500" />
      <circle cx="39.500" cy="38" r="23.500" fill="none" stroke="#8a673c" strokeWidth="1.800" />
      <circle cx="39.500" cy="33" r="8.500" fill="#8f6b3f" /><path d="M22.500 54c5-9 29-9 34 0-8 10-26 10-34 0z" fill="#8f6b3f" />
    </svg>) },
  { id: "reminders", badge: 2, node: (
    <div className={`${icon} bg-[#fbfbfa]`}><S76>
      {[["#3474f5", 19], ["#e5443a", 38], ["#ea9a35", 57]].map(([c, y]) => (
        <g key={y}><circle cx="14.500" cy={y} r="5.800" fill="none" stroke={c} strokeWidth="1.500" /><circle cx="14.500" cy={y} r="3.800" fill={c} /><path d={`M28 ${y}h40`} stroke="#b4b4b6" strokeWidth="1.500" /></g>
      ))}
    </S76></div>) },
  { id: "notes", dot: true, node: (
    <div className={`${icon} bg-[#f3f2ee]`}><S76>
      <rect width="76" height="19" fill="#f8ce4b" /><path d="M0 19.500h76" stroke="#a9a69c" strokeWidth="1.800" />
      <path d="M1 23h74" stroke="#a9a69c" strokeWidth="1.500" strokeDasharray="1.300 2" /><path d="M0 38h76M0 57h76" stroke="#d3d2ce" strokeWidth="1.800" />
    </S76></div>) },
  { id: "telegram", node: (
    <div className={`${icon} bg-[#fafafb]`}><div className="flex h-[65px] w-[65px] items-center justify-center rounded-full bg-linear-to-b from-[#62b6ee] to-[#3c8acb] text-white"><FaTelegramPlane className="-ml-[4px] h-[38px] w-[38px]" /></div></div>) },
  { id: "tv", node: (
    <div className={`${icon} bg-linear-to-b from-[#2c3834] to-[#0b0f12] text-white`}><FaApple className="h-[28px] w-[23px]" /><span className="text-[32px] leading-none font-medium tracking-[-0.5px]">tv</span></div>) },
  { id: "music", dot: true, node: (
    <div className={`${icon} bg-linear-to-b from-[#ec6076] to-[#e63a43]`}><S76>
      <path d="M27 18.500q0-2 2-2.500l24-4.500q2.500-.3 2.500 2V48c0 5-3.500 8.500-8 9-4 .3-6.500-2.500-6-6 .5-4 4-6 7.500-6.500 2-.3 2.500-1 2.500-3V26l-20 4v24c0 5-3.500 8.500-8 9-4 .3-7-2.500-6.500-6.500.5-3.500 3.500-5.500 7.500-6 2-.3 2.500-1 2.500-3z" fill="#fff" />
    </S76></div>) },
  { id: "appstore", badge: 1, node: (
    <div className={`${icon} bg-linear-to-b from-[#53b6f3] to-[#2657d0]`}><S76>
      <path d="M41 17L25 46M20 55l-1.500 3M33.500 17L57 58" fill="none" stroke="#f4f8fd" strokeWidth="6.500" strokeLinecap="round" /><path d="M14 47h48" stroke="#f4f8fd" strokeWidth="6" strokeLinecap="round" />
    </S76></div>) },
  { id: "settings", badge: 1, node: (
    <div className={`${icon} bg-linear-to-b from-[#d5dfe6] to-[#8f8e8c]`}><S76>
      <circle cx="38" cy="38" r="33" fill="#3b3c3e" />
      {teeth.map((a) => <path key={a} d="M38 7v5" stroke="#c6c8ca" strokeWidth="2" transform={`rotate(${a} 38 38)`} />)}
      <circle cx="38" cy="38" r="25" fill="none" stroke="#aeb0b2" strokeWidth="4" />
      <circle cx="38" cy="38" r="18" fill="#5c5d5e" stroke="#808283" strokeWidth="2.500" strokeDasharray="2 1.500" /><circle cx="38" cy="38" r="9" fill="#454648" />
      <path d="M38 38h24M38 38L26 17M38 38L26 59" stroke="#b9bbbd" strokeWidth="3.600" /><circle cx="38" cy="38" r="3.500" fill="#8e9092" />
    </S76></div>) },
  { id: "notion", dot: true, node: (
    <svg width="76" height="80" viewBox="0 0 76 80" className="-my-[2px]">
      <path d="M5 7L53 2.500 73 16v56L18 77 3 58V8z" fill="#fff" stroke="#fff" strokeWidth="4.500" strokeLinejoin="round" />
      <path d="M5 9L52 5 71 18v52.500L19 74.500 5 57z" fill="#1c1c1b" stroke="#1c1c1b" strokeWidth="3" strokeLinejoin="round" />
      <path d="M10 10.500L50.500 7 63 15.500 21.500 18.500z" fill="#fbfbfb" /><path d="M20 24.500l47-3.500v46l-47 4z" fill="#fbfbfb" />
      <path d="M26 31l11-.8L53 53V34l-5-1v-3l13-1v3l-3.500 1.500v30L52 64 34 37.500V58l5.500 1v3l-14 1v-3l4-1.500V35L26 34z" fill="#1c1c1b" />
    </svg>) },
  { id: "discord", badge: 1, dot: true, node: (
    <div className={`${icon} bg-linear-to-b from-[#7a7cf4] to-[#5a62ea] text-white`}><FaDiscord className="h-[56px] w-[56px]" /></div>) },
  { id: "lantern", dot: true, node: (
    <div className={`${icon} bg-white`}><S76>
      <circle cx="38" cy="38" r="35" fill="#59b8d0" />
      <path d="M24.500 28h27l-5 29-8.500 8-8.500-8z" fill="#f1df52" /><path d="M35 28h6v36l-3 3-3-3z" fill="#1d1c1a" />
      <path d="M32 15h12l1 6 7 4v4H24v-4l7-4z" fill="#1d1c1a" /><circle cx="38" cy="12" r="3.500" fill="none" stroke="#1d1c1a" strokeWidth="1.500" />
    </S76></div>) },
  { id: "canva", dot: true, node: (
    <div className={`${icon} bg-[radial-gradient(circle_at_20%_10%,#54c6c8_20%,transparent_75%),linear-gradient(115deg,#3f8ddb_0%,#5a2ef0_70%,#7d32dc_100%)] font-['Liberation_Serif'] text-[25px] font-bold tracking-[-1px] text-white italic`}>Canva</div>) },
];

function Dock() {
  return (
    <div className="relative mt-[2px] ml-[237px] flex h-[116px] w-[2407px] shrink-0 items-start rounded-[36px] border-2 border-white/20 bg-[linear-gradient(90deg,#5e5b6b_0%,#62606e_8%,#8a746f_14.500%,#8f7770_17%,#b0989b_24%,#aa9eb1_31%,#ada0b2_42%,#a3888a_45%,#a98976_49%,#8c7a74_53%,#a08772_61%,#a58577_66%,#a5857a_75%,#6d6a76_80%,#74747f_85%,#857878_93%,#8a7d7c_100%)] bg-clip-border pt-[15px] pl-[14px] shadow-[0_0_110px_rgba(20,30,20,0.3)]">
      <div className="flex gap-[22px]">
        {apps.map((app) => (
          <div key={app.id} className="relative h-[76px] w-[76px]">
            {app.node}
            {app.badge && (
              <div className="absolute -top-[10px] left-[51px] flex h-[36px] w-[36px] items-center justify-center rounded-full bg-[#e55343] text-[21px] text-white shadow-[0_1px_3px_rgba(0,0,0,0.4)]">{app.badge}</div>
            )}
            {app.dot && <div className="absolute top-[87px] left-[33px] h-[8px] w-[8px] rounded-full bg-[#0d0404]" />}
          </div>
        ))}
      </div>
      <div className="ml-[33px] h-[84px] w-[2px] bg-[#46434a]" />
      <svg className="mt-[2px] ml-[26px]" width="87" height="74" viewBox="0 0 87 74">
        <path d="M0 8q0-7 7-7h18q4 0 7 3l4 4h44q7 0 7 7v12H0z" fill="#4f9dd3" />
        <rect y="13" width="87" height="60" rx="6" fill="#85caf7" /><path d="M1 66h85" stroke="#6bb3e4" strokeWidth="1.500" />
        <circle cx="43.500" cy="40" r="16.500" fill="#569fd8" /><path d="M43.500 31v17M37 42l6.500 6.500L50 42" fill="none" stroke="#85caf7" strokeWidth="2.600" strokeLinecap="round" />
      </svg>
      <div className="relative mt-[13px] ml-[10px] h-[50px] w-[88px]">
        <svg width="88" height="50" viewBox="0 0 88 50">
          <rect width="88" height="50" fill="#f9fafc" /><rect width="88" height="4.500" fill="#e4e5e9" />
          <path d="M2 4.500h44" stroke="#a85c5c" strokeWidth="1" strokeDasharray="2 2" /><rect y="5" width="88" height="6.500" fill="#1c3a60" />
          <rect x="72" y="11.500" width="16" height="38.500" fill="#d9e3ee" /><rect x="72" y="13.500" width="11" height="3" fill="#3c5a86" /><rect x="73" y="21" width="13" height="20" fill="#fbfbf8" />
          <rect y="17" width="72" height="3" fill="#e3e9f1" /><rect y="38" width="72" height="3" fill="#dbe4ee" /><path d="M2 13h8M2 42h14M4 24v12M9 24v12" stroke="#8fa2b8" strokeWidth="1" strokeDasharray="1.500 1.500" />
        </svg>
        <Compass className="absolute top-[39px] left-[58px] h-[28px] w-[28px]" />
      </div>
      <svg className="-mt-[8px] ml-[20px]" width="68" height="90" viewBox="0 0 68 90">
        <defs><linearGradient id="bin" x1="0" y1="0" x2="1" y2="0"><stop offset="0" stopColor="#d9d8d8" /><stop offset="0.3" stopColor="#c6c5c4" /><stop offset="0.7" stopColor="#cfcecd" /><stop offset="1" stopColor="#e9e9e9" /></linearGradient></defs>
        <ellipse cx="34" cy="14" rx="33" ry="9" fill="#9d9b9a" stroke="#e8e8e8" strokeWidth="1.500" />
        <path d="M4 12l8-6 10-5 7 3 9 4 4-6 10 6 9 3 1 8-9 5H12z" fill="#e6e6e6" /><path d="M14 16l8-6 6 8zM36 18l6-11 9 8zM22 4l9 3-7 2z" fill="#5b5a5c" /><path d="M22 11l10-1-3 5z" fill="#53c7c0" /><path d="M41 10l6-1 2 6z" fill="#3d5ea8" /><path d="M32 14l4-3-1 8z" fill="#e0803c" />
        <path d="M1 15q33 14 66 0l-7 64q-1 9-26 9T9 79z" fill="url(#bin)" opacity=".95" /><path d="M12 80q22 8 44 0" stroke="#f1f1f1" strokeWidth="4" fill="none" opacity=".7" />
      </svg>
    </div>
  );
}

export default function App() {
  return (
    <div className="relative flex h-[1800px] w-[2880px] flex-col overflow-hidden font-[Inter,sans-serif]">
      <Wallpaper />
      <MenuBar />
      <div className="relative mt-[2px] flex h-[1622px] shrink-0 flex-col overflow-hidden rounded-[20px] bg-white">
        <Toolbar />
        <TabBar />
        <Content />
      </div>
      <Dock />
    </div>
  );
}
